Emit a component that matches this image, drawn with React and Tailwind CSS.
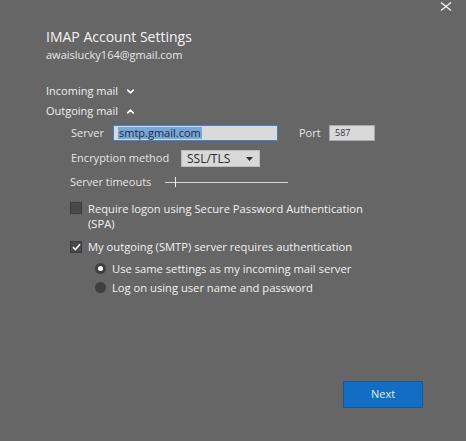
import { ChevronDown, ChevronUp } from 'lucide-react';

const font = { fontFamily: '"Open Sans", "Noto Sans", sans-serif' };

function Check({ checked }) {
  return (
    <span className="w-[12px] h-[12px] shrink-0 bg-[#4a4a4a] border border-[#3c3c3c] flex items-center justify-center">
      {checked && (
        <svg width="9" height="8" viewBox="0 0 9 8" fill="none">
          <path d="M1 4.2 L3.4 6.5 L8 1.2" stroke="#f4f4f4" strokeWidth="1.6" />
        </svg>
      )}
    </span>
  );
}

function Radio({ on }) {
  return (
    <span className="w-[11px] h-[11px] shrink-0 rounded-full bg-[#3f3f3f] flex items-center justify-center">
      {on && <span className="w-[5px] h-[5px] rounded-full bg-white" />}
    </span>
  );
}

export default function App() {
  return (
    <div className="w-[466px] h-[441px] bg-[#666666] text-[#f0f0f0] flex flex-col overflow-hidden" style={font}>
      <div className="flex justify-end pr-[14px] pt-[2px] h-[12px]">
        <svg width="12" height="9" viewBox="0 0 12 9">
          <path d="M1 0.5 L11 8.5 M11 0.5 L1 8.5" stroke="#f6f6f6" strokeWidth="1.3" />
        </svg>
      </div>

      <div className="pl-[46px] flex flex-col">
        <h1 className="text-[14px] leading-[18px] mt-[16px] text-[#f4f4f4]">IMAP Account Settings</h1>
        <p className="text-[11px] leading-[14px] mt-[2px] text-[#e6e6e6]">awaislucky164@gmail.com</p>

        <div className="flex items-center gap-[7px] text-[11px] leading-[14px] mt-[22px]">
          Incoming mail <ChevronDown size={11} strokeWidth={3.5} color="#ffffff" />
        </div>
        <div className="flex items-center gap-[7px] text-[11px] leading-[14px] mt-[6px]">
          Outgoing mail <ChevronUp size={11} strokeWidth={3.5} color="#ffffff" />
        </div>

        <div className="pl-[25px] flex flex-col">
          <div className="flex items-center text-[11px] mt-[7px] h-[16px]">
            <span className="w-[42px] text-[#e4e4e4]">Server</span>
            <div className="w-[165px] h-[16px] bg-[#dadada] border border-[#3b82cc] flex items-center pl-[4px]">
              <span className="bg-[#78a6d9] text-[#1e2b44] leading-[12px] px-[1px]">smtp.gmail.com</span>
            </div>
            <span className="ml-[21px] w-[30px] text-[#e4e4e4]">Port</span>
            <div className="w-[46px] h-[16px] bg-[#d9d9d9] border border-[#a9a9a9] flex items-center pl-[5px] text-[9px] text-[#333]">587</div>
          </div>

          <div className="flex items-center text-[11px] mt-[9px] h-[17px]">
            <span className="w-[110px] text-[#e4e4e4]">Encryption method</span>
            <div className="w-[79px] h-[17px] bg-[#d8d8d8] border border-[#bdbdbd] flex items-center justify-between pl-[5px] pr-[6px] text-[12px] text-[#2b2b2b]">
              SSL/TLS
              <svg width="7" height="4" viewBox="0 0 7 4"><path d="M0 0 H7 L3.5 4 Z" fill="#333" /></svg>
            </div>
          </div>

          <div className="flex items-center text-[11px] mt-[9px] h-[12px]">
            <span className="w-[95px] text-[#e4e4e4] -ml-[1px]">Server timeouts</span>
            <div className="relative w-[123px] h-[10px] flex items-center">
              <div className="w-full h-[1px] bg-[#d4d4d4]" />
              <div className="absolute left-[10px] top-0 w-[1px] h-[10px] bg-[#f0f0f0]" />
            </div>
          </div>

          <div className="flex items-start gap-[6px] text-[11.2px] leading-[15px] mt-[13px] -ml-[1px]">
            <span className="mt-[1px]"><Check /></span>
            <span className="w-[290px]">Require logon using Secure Password Authentication (SPA)</span>
          </div>

          <div className="flex items-center gap-[6px] text-[11.2px] leading-[15px] mt-[8px] -ml-[1px]">
            <Check checked />
            <span>My outgoing (SMTP) server requires authentication</span>
          </div>

          <div className="flex flex-col pl-[24px] gap-[4px] mt-[7px]">
            <div className="flex items-center gap-[6px] text-[11.2px] leading-[15px]">
              <Radio on />
              <span>Use same settings as my incoming mail server</span>
            </div>
            <div className="flex items-center gap-[6px] text-[11.2px] leading-[15px]">
              <Radio />
              <span>Log on using user name and password</span>
            </div>
          </div>
        </div>
      </div>

      <div className="flex justify-end pr-[43px] mt-auto mb-[33px]">
        <button className="w-[80px] h-[27px] bg-[#116ec3] border border-[#0d5aa2] text-[#e3ecf7] text-[11px]">Next</button>
      </div>
    </div>
  );
}
